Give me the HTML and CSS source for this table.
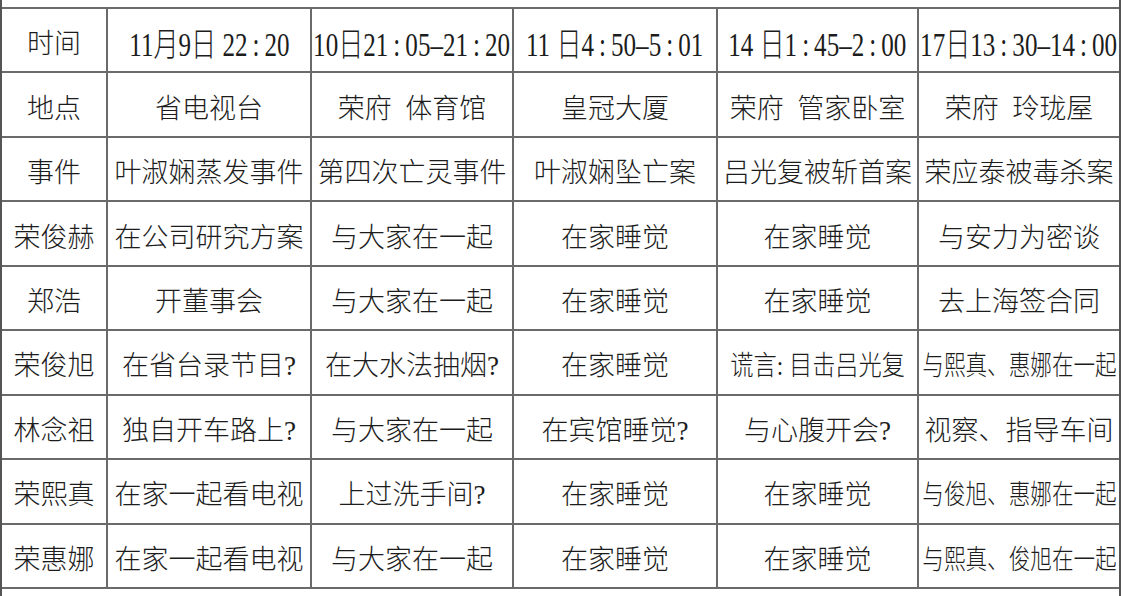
FILE: index.html
```html
<!DOCTYPE html>
<html lang="zh-CN">
<head>
<meta charset="utf-8">
<title>时间线</title>
<link rel="stylesheet" href="styles.css">
</head>
<body>
<div class="frame">
  <div class="table">
    <div class="cell head">时间</div>
    <div class="cell time"><span class="sq">11月9日 22&thinsp;:&thinsp;20</span></div>
    <div class="cell time"><span class="sq">10日21&thinsp;:&thinsp;05–21&thinsp;:&thinsp;20</span></div>
    <div class="cell time"><span class="sq">11 日4&thinsp;:&thinsp;50–5&thinsp;:&thinsp;01</span></div>
    <div class="cell time"><span class="sq">14 日1&thinsp;:&thinsp;45–2&thinsp;:&thinsp;00</span></div>
    <div class="cell time last"><span class="sq">17日13&thinsp;:&thinsp;30–14&thinsp;:&thinsp;00</span></div>

    <div class="cell head">地点</div>
    <div class="cell">省电视台</div>
    <div class="cell">荣府&nbsp;&nbsp;体育馆</div>
    <div class="cell">皇冠大厦</div>
    <div class="cell">荣府&nbsp;&nbsp;管家卧室</div>
    <div class="cell last">荣府&nbsp;&nbsp;玲珑屋</div>

    <div class="cell head">事件</div>
    <div class="cell">叶淑娴蒸发事件</div>
    <div class="cell">第四次亡灵事件</div>
    <div class="cell">叶淑娴坠亡案</div>
    <div class="cell">吕光复被斩首案</div>
    <div class="cell last">荣应泰被毒杀案</div>

    <div class="cell head">荣俊赫</div>
    <div class="cell">在公司研究方案</div>
    <div class="cell">与大家在一起</div>
    <div class="cell">在家睡觉</div>
    <div class="cell">在家睡觉</div>
    <div class="cell last">与安力为密谈</div>

    <div class="cell head">郑浩</div>
    <div class="cell">开董事会</div>
    <div class="cell">与大家在一起</div>
    <div class="cell">在家睡觉</div>
    <div class="cell">在家睡觉</div>
    <div class="cell last">去上海签合同</div>

    <div class="cell head">荣俊旭</div>
    <div class="cell">在省台录节目?</div>
    <div class="cell">在大水法抽烟?</div>
    <div class="cell">在家睡觉</div>
    <div class="cell"><span class="sq2">谎言: 目击吕光复</span></div>
    <div class="cell last"><span class="sq3">与熙真、惠娜在一起</span></div>

    <div class="cell head">林念祖</div>
    <div class="cell">独自开车路上?</div>
    <div class="cell">与大家在一起</div>
    <div class="cell">在宾馆睡觉?</div>
    <div class="cell">与心腹开会?</div>
    <div class="cell last">视察、指导车间</div>

    <div class="cell head">荣熙真</div>
    <div class="cell">在家一起看电视</div>
    <div class="cell">上过洗手间?</div>
    <div class="cell">在家睡觉</div>
    <div class="cell">在家睡觉</div>
    <div class="cell last"><span class="sq3">与俊旭、惠娜在一起</span></div>

    <div class="cell head">荣惠娜</div>
    <div class="cell">在家一起看电视</div>
    <div class="cell">与大家在一起</div>
    <div class="cell">在家睡觉</div>
    <div class="cell">在家睡觉</div>
    <div class="cell last"><span class="sq3">与熙真、俊旭在一起</span></div>
  </div>
</div>
</body>
</html>
```

FILE: styles.css
```css
html, body {
  margin: 0;
  padding: 0;
  background: #ffffff;
}

body {
  width: 1123px;
  height: 596px;
  overflow: hidden;
  font-family: "Liberation Serif", "Noto Sans CJK SC", serif;
  color: #1c1c1c;
}

.frame {
  box-sizing: border-box;
  width: 1121px;
  height: 596px;
  border-left: 2px solid #555;
  border-right: 2px solid #555;
  padding-top: 7px;
}

.table {
  box-sizing: border-box;
  height: 582px;
  display: grid;
  grid-template-columns: 106px 204px 202px 204px 201px 200px;
  grid-template-rows: repeat(9, 1fr);
  border-top: 2px solid #6a6a6a;
}

.cell {
  display: flex;
  align-items: center;
  justify-content: center;
  border-right: 2px solid #6a6a6a;
  border-bottom: 2px solid #6a6a6a;
  font-size: 27px;
  font-weight: 300;
  white-space: nowrap;
  overflow: visible;
  padding-top: 3px;
}

.cell.last {
  border-right: none;
}

.time {
  font-size: 33px;
}

.sq {
  display: inline-block;
  transform: scaleX(0.76);
}

.sq2 {
  display: inline-block;
  transform: scaleX(0.86);
}

.sq3 {
  display: inline-block;
  transform: scaleX(0.8);
}
```
